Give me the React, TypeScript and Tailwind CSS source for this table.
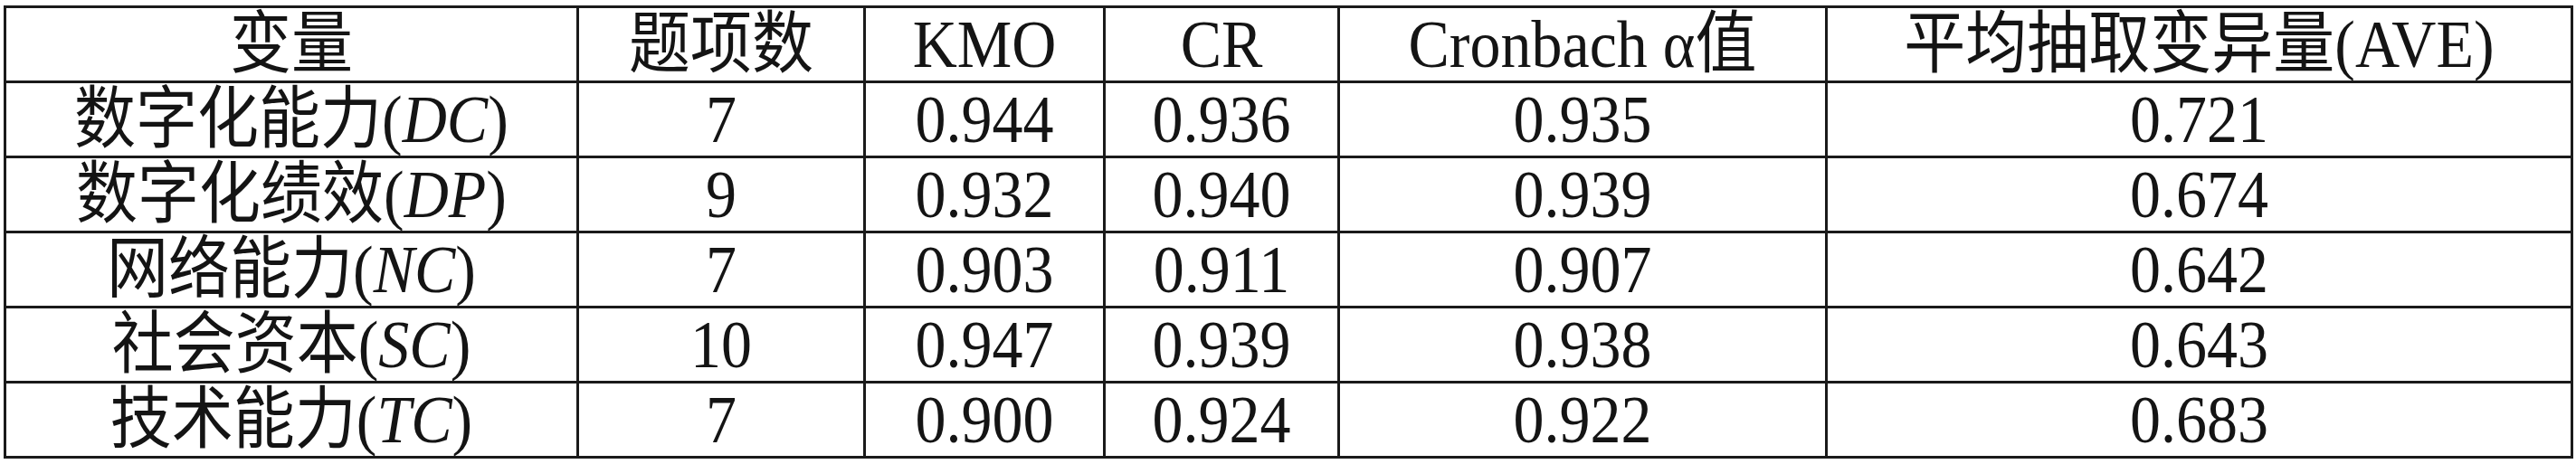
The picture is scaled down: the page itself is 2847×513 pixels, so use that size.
// reliability and validity table
import { Fragment } from "react";

type Row = {
  name: string;
  abbr: string;
  items: string;
  kmo: string;
  cr: string;
  alpha: string;
  ave: string;
};

const rows: Row[] = [
  { name: "数字化能力", abbr: "DC", items: "7", kmo: "0.944", cr: "0.936", alpha: "0.935", ave: "0.721" },
  { name: "数字化绩效", abbr: "DP", items: "9", kmo: "0.932", cr: "0.940", alpha: "0.939", ave: "0.674" },
  { name: "网络能力", abbr: "NC", items: "7", kmo: "0.903", cr: "0.911", alpha: "0.907", ave: "0.642" },
  { name: "社会资本", abbr: "SC", items: "10", kmo: "0.947", cr: "0.939", alpha: "0.938", ave: "0.643" },
  { name: "技术能力", abbr: "TC", items: "7", kmo: "0.900", cr: "0.924", alpha: "0.922", ave: "0.683" },
];

function Cell({ children }: { children: React.ReactNode }): JSX.Element {
  return (
    <div className="flex items-center justify-center bg-white leading-none whitespace-nowrap">
      <span className="inline-block scale-y-[1.1]">{children}</span>
    </div>
  );
}

export default function App(): JSX.Element {
  return (
    <div className="w-[2847px] h-[513px] bg-white pt-[6px] pl-[4px] text-[68px] text-[#141414] font-['Liberation_Serif','Noto_Sans_CJK_SC',serif]">
      <div className="grid w-fit grid-cols-[630px_314px_262px_256px_536px_821px] grid-rows-[repeat(6,80px)] gap-[3px] p-[3px] bg-[#1a1a1a]">
        <Cell>变量</Cell>
        <Cell>题项数</Cell>
        <Cell>KMO</Cell>
        <Cell>CR</Cell>
        <Cell>Cronbach α值</Cell>
        <Cell>平均抽取变异量(AVE)</Cell>

        {rows.map((r) => (
          <Fragment key={r.abbr}>
            <Cell>
              {r.name}(<span className="italic">{r.abbr}</span>)
            </Cell>
            <Cell>{r.items}</Cell>
            <Cell>{r.kmo}</Cell>
            <Cell>{r.cr}</Cell>
            <Cell>{r.alpha}</Cell>
            <Cell>{r.ave}</Cell>
          </Fragment>
        ))}
      </div>
    </div>
  );
}
